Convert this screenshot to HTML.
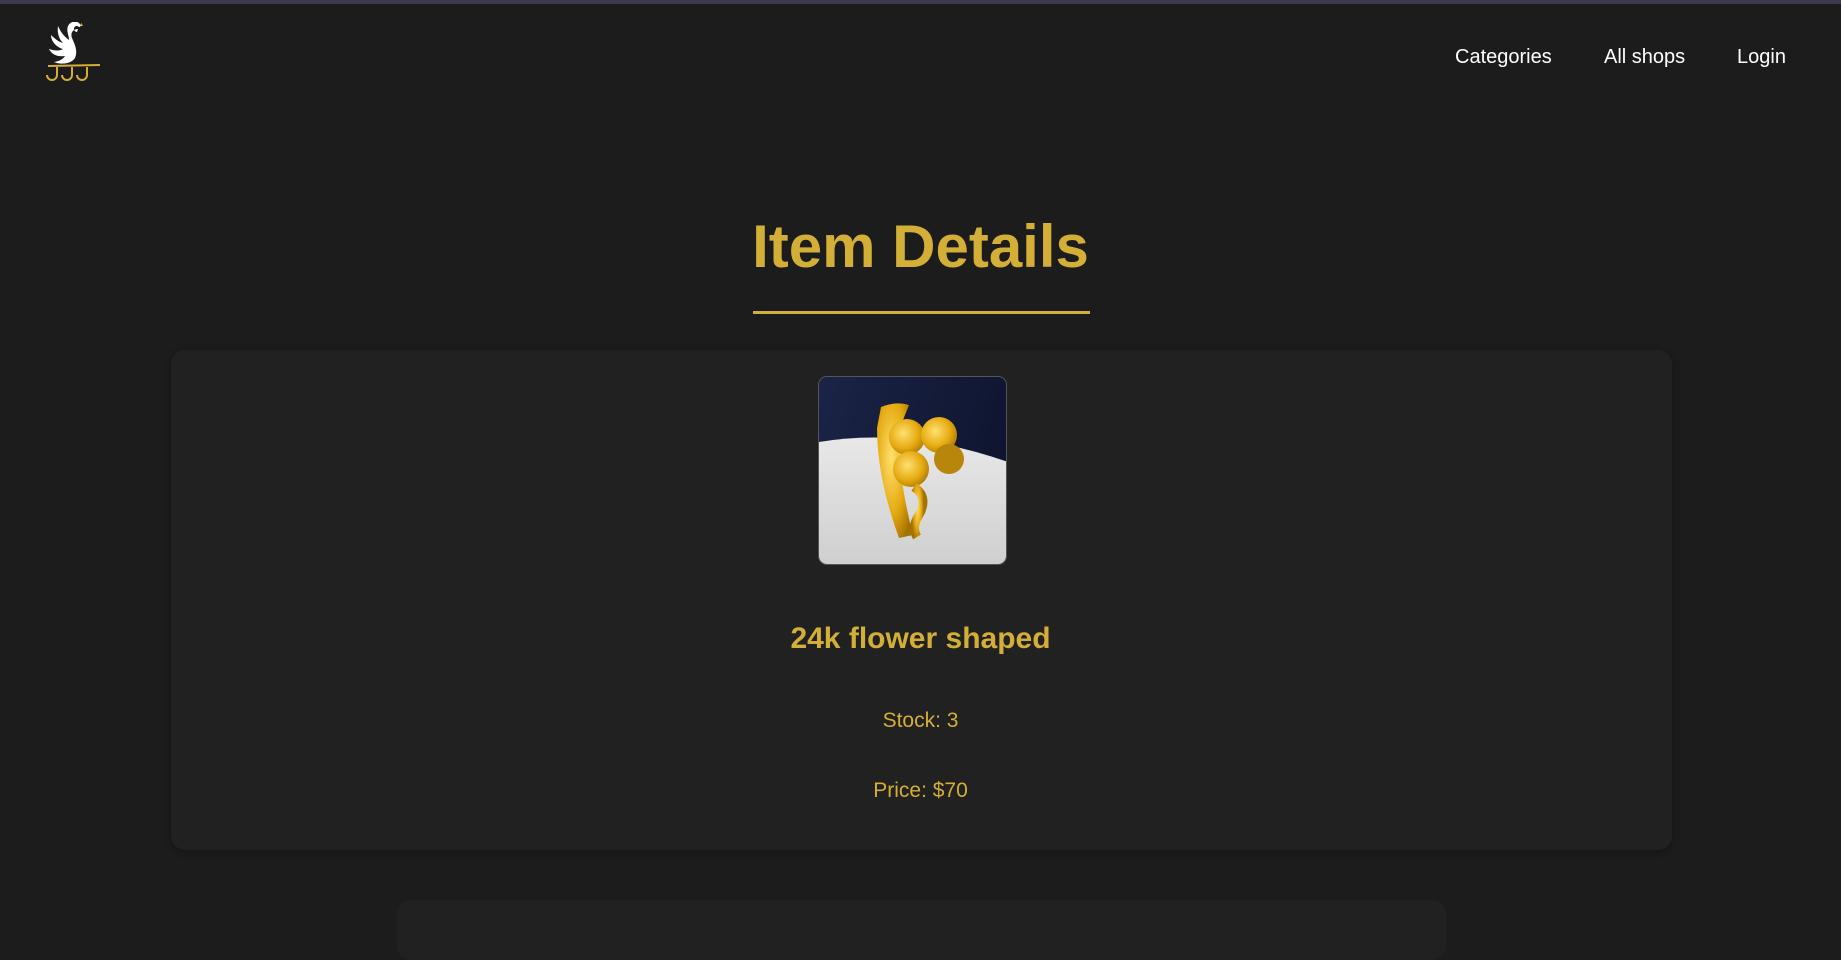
<!DOCTYPE html>
<html><head><meta charset="utf-8"><style>
*{margin:0;padding:0;box-sizing:border-box}
body{width:1841px;height:935px;overflow:hidden;background:#1c1c1c;font-family:"Liberation Sans",sans-serif;position:relative}
.top{position:absolute;left:0;top:0;width:100%;height:4px;background:#3e3a4e}
.nav a{position:absolute;top:46px;color:#fff;font-size:20px;text-decoration:none}
h1{position:absolute;left:0;width:100%;top:217px;text-align:center;color:#d4af37;font-size:60px;font-weight:bold;line-height:1}
.ul{position:absolute;left:753px;top:311px;width:337px;height:3px;background:#d4af37}
.card{position:absolute;left:171px;top:350px;width:1501px;height:500px;background:#212121;border-radius:14px;box-shadow:0 2px 8px rgba(0,0,0,.3)}
.card2{position:absolute;left:397px;top:900px;width:1049px;height:60px;background:#212121;border-radius:14px}
.img{position:absolute;left:818px;top:376px;width:189px;height:189px;border-radius:9px;border:1px solid #555;overflow:hidden}
.t{position:absolute;left:0;width:100%;text-align:center;color:#d4af37}
</style></head><body>
<div class="top"></div>
<svg style="position:absolute;left:44px;top:22px" width="60" height="64" viewBox="0 0 60 64">
<path d="M30 4 l1.5 -3 1.5 2 1.5 -2 1.5 2 1.5 -2 1.5 3z" fill="#d4af37"/>
<path d="M34 7 c-5 0 -8 4 -6 9 c3 7 6 13 3 20 c-4 6 -14 7 -21 4 c6 -1 9 -3 11 -6 c-7 1 -13 -1 -16 -7 c6 2 11 2 14 0 c-7 -2 -12 -8 -12 -14 c4 4 8 7 12 8 c-4 -4 -6 -10 -5 -17 c3 7 7 11 11 14 c0 -5 -3 -9 -1 -14 c2 -4 7 -6 11 -3 c2 2 2 4 0 4 c-2 -2 -5 -1 -5 2 c0 2 2 3 3 3 z" fill="#fff"/>
<line x1="4" y1="44" x2="56" y2="43" stroke="#d4af37" stroke-width="2"/>
<path d="M13 45 v8 a5 5 0 0 1 -10 0 M28 45 v8 a5 5 0 0 1 -10 0 M43 45 v8 a5 5 0 0 1 -10 0" stroke="#d4af37" stroke-width="2" fill="none"/>
</svg>
<div class="nav"><a style="left:1455px">Categories</a><a style="left:1604px">All shops</a><a style="left:1737px">Login</a></div>
<h1>Item Details</h1>
<div class="ul"></div>
<div class="card"></div>
<div class="card2"></div>
<div class="img">
<svg width="189" height="189" viewBox="0 0 189 189">
<defs><linearGradient id="bg" x1="0" y1="0" x2="1" y2="0.3"><stop offset="0" stop-color="#1b2447"/><stop offset="1" stop-color="#0f1530"/></linearGradient>
<linearGradient id="w" x1="0" y1="0" x2="0" y2="1"><stop offset="0" stop-color="#e8e8e8"/><stop offset="1" stop-color="#cfcfcf"/></linearGradient>
<radialGradient id="g" cx=".4" cy=".4" r=".7"><stop offset="0" stop-color="#ffe070"/><stop offset=".6" stop-color="#e5aa10"/><stop offset="1" stop-color="#a57200"/></radialGradient></defs>
<rect width="189" height="189" fill="url(#bg)"/>
<path d="M0 65 Q90 50 189 85 V189 H0z" fill="url(#w)"/>
<path d="M62 30 q15 -6 28 -2 l-8 20 q-6 40 12 110 l-14 3 q-22 -60 -22 -110 z" fill="url(#g)"/>
<circle cx="88" cy="60" r="18" fill="url(#g)"/><circle cx="120" cy="58" r="18" fill="url(#g)"/>
<circle cx="92" cy="92" r="18" fill="url(#g)"/><circle cx="130" cy="82" r="15" fill="#b8860b"/>
<path d="M95 110 q15 10 5 28 q-8 12 -2 22" stroke="url(#g)" stroke-width="9" fill="none"/>
</svg></div>
<div class="t" style="top:622px;font-size:30px;font-weight:bold">24k flower shaped</div>
<div class="t" style="top:709px;font-size:21px">Stock: 3</div>
<div class="t" style="top:779px;font-size:21px">Price: $70</div>
</body></html>
